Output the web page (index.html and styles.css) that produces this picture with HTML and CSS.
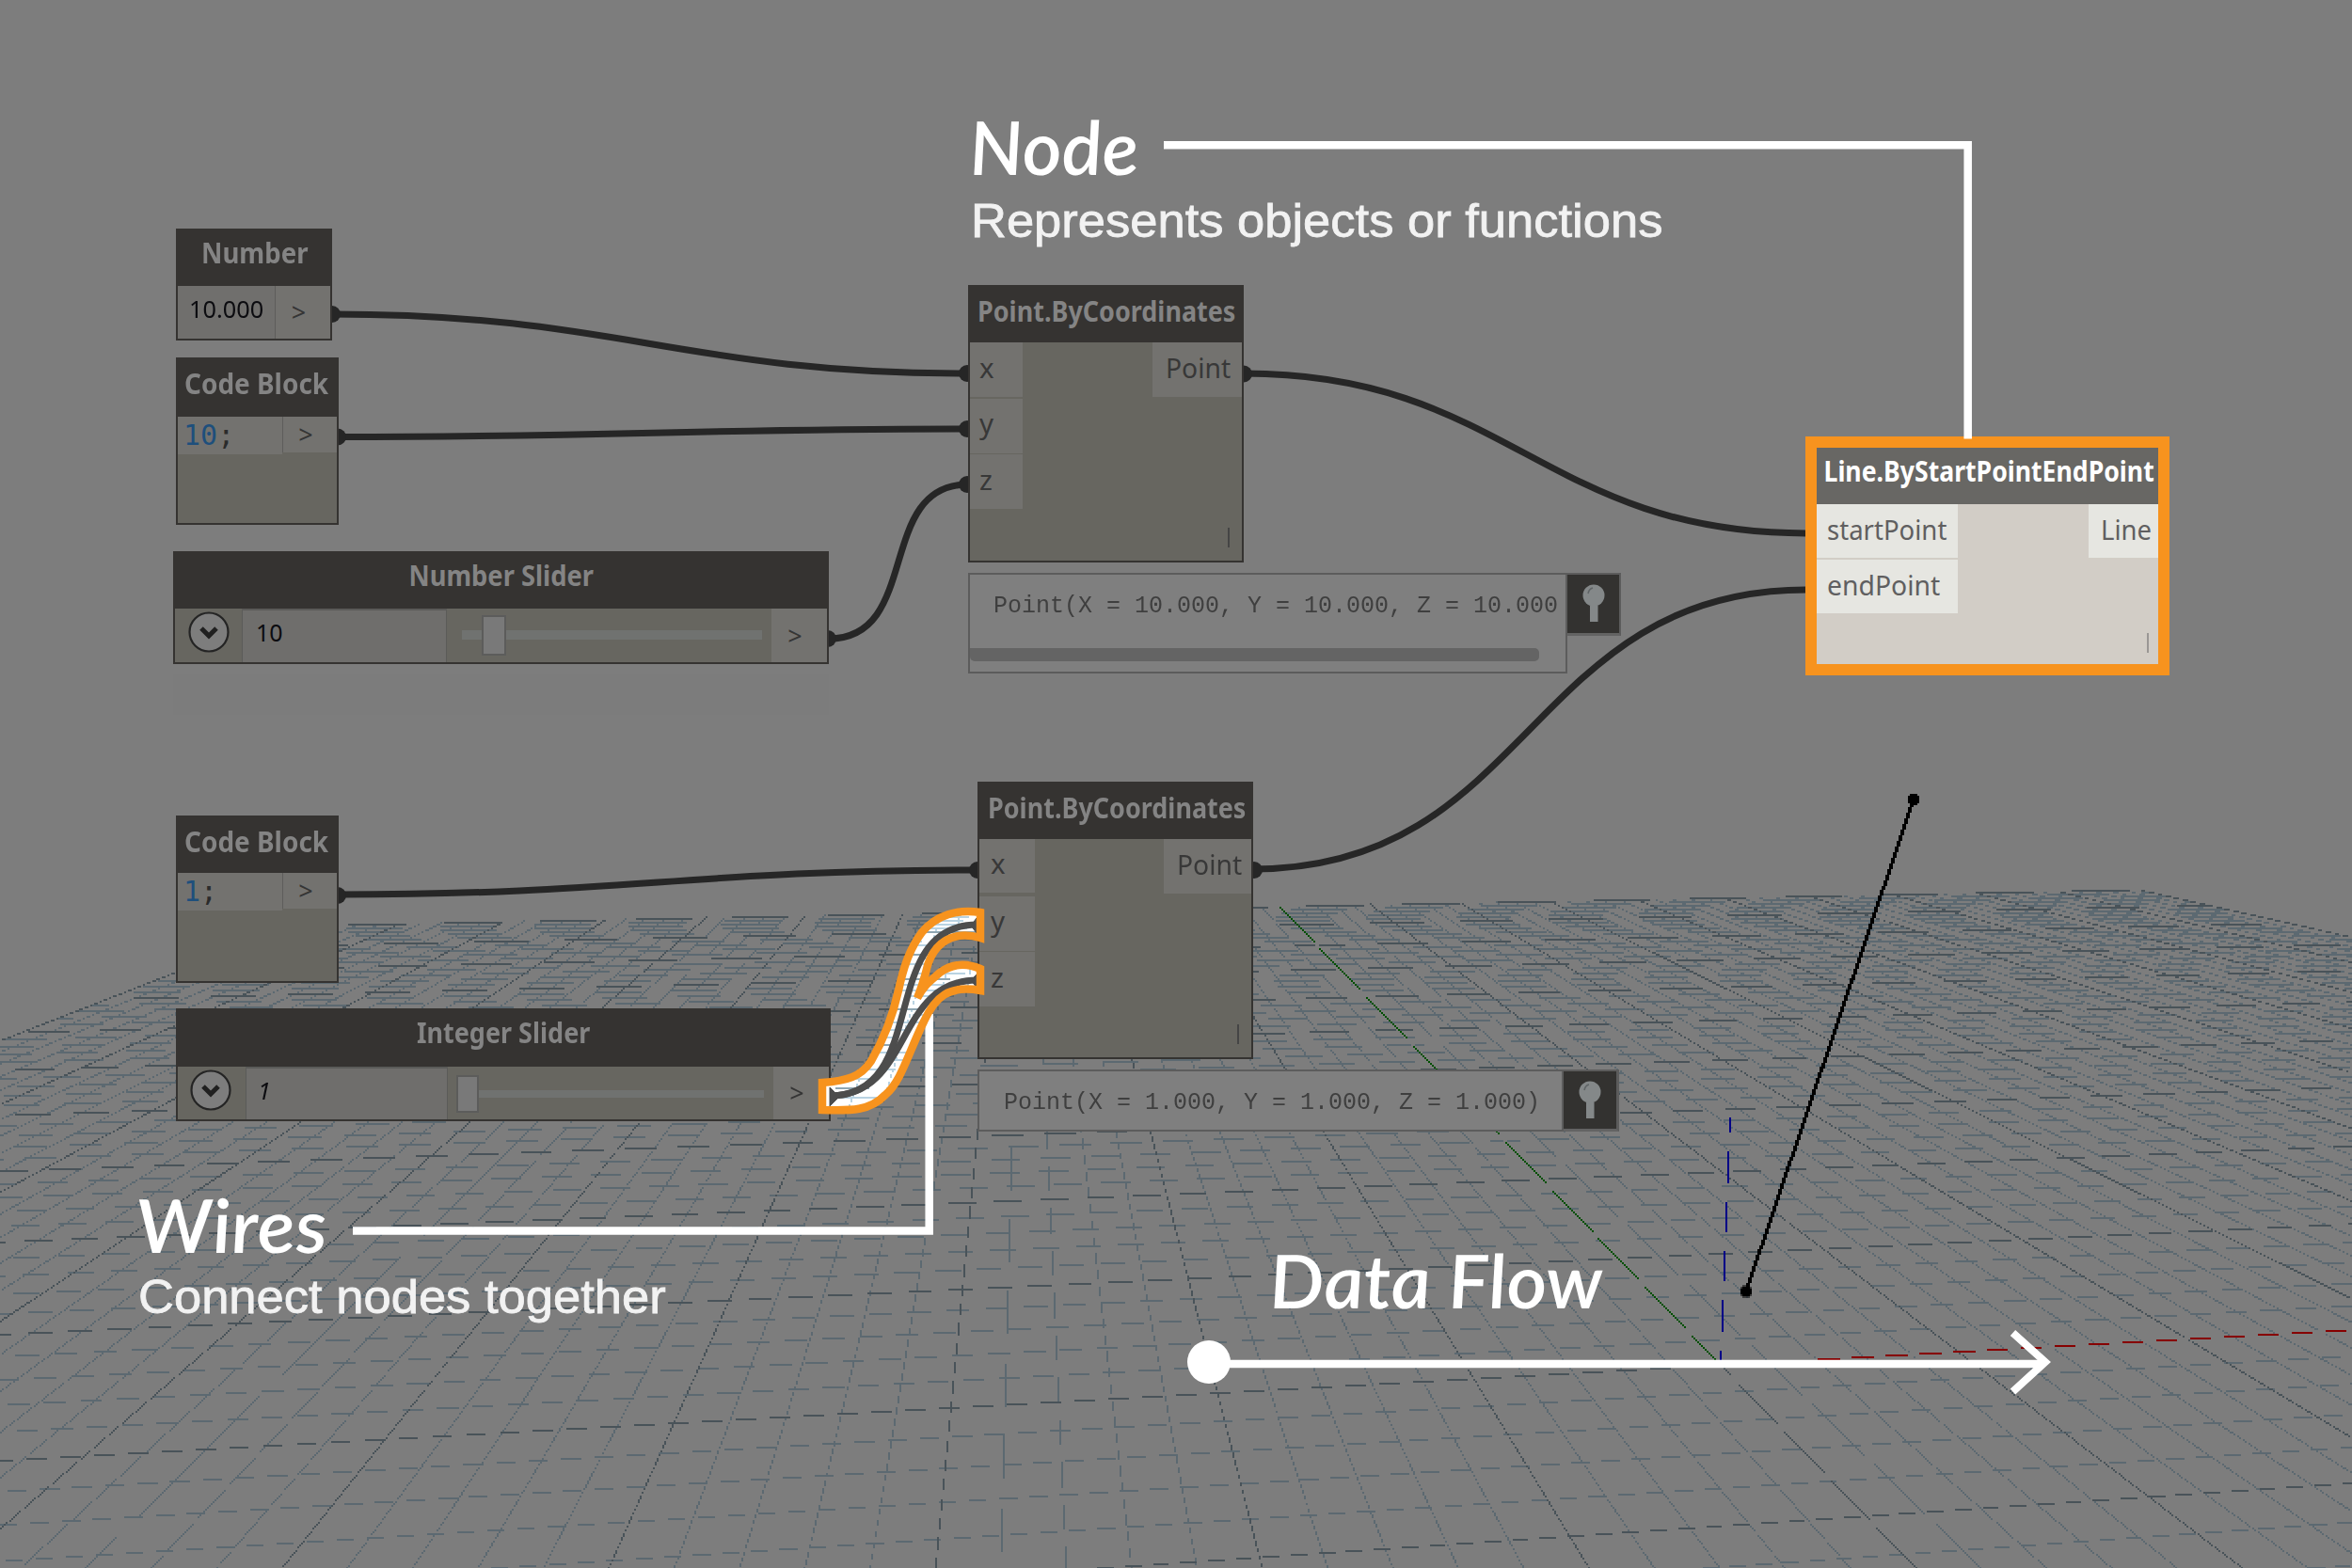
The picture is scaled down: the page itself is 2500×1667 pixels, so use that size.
FILE: index.html
```html
<!DOCTYPE html>
<html lang="en">
<head>
<meta charset="utf-8">
<title>Visual program</title>
<link rel="stylesheet" href="styles.css">
</head>
<body>
<main class="workspace">
  <canvas class="scene" id="scene" width="1250" height="834"></canvas>

  <svg class="layer" viewBox="0 0 2500 1667">
    <rect class="ghost" x="184" y="717" width="697" height="43"/>
    <g class="wire">
      <path d="M353 334C658 334 724 397 1029 397"/>
      <path d="M360 464.500C661 464.500 728 456 1029 456"/>
      <path d="M881 679C980 679 930 515 1029 515"/>
      <path d="M1322 397C1602 397 1640 567 1920 567"/>
      <path d="M1332 924C1628 924 1624 627 1920 627"/>
      <path d="M360 951C666 951 733 925 1039 925"/>
    </g>
    <g class="plug">
      <circle cx="353" cy="334" r="9"/><circle cx="1028" cy="397" r="9"/>
      <circle cx="359" cy="464.500" r="9"/><circle cx="1028" cy="456" r="9"/>
      <circle cx="880" cy="679" r="9"/><circle cx="1028" cy="515" r="9"/>
      <circle cx="1322" cy="397.500" r="9"/><circle cx="1333" cy="925" r="9"/>
      <circle cx="359" cy="952" r="9"/><circle cx="1039" cy="925" r="9"/>
    </g>
  </svg>

  <section class="node number">
    <h2 class="head low"><span data-w="113">Number</span></h2>
    <div class="row">
      <div class="cell value"><span data-w="79">10.000</span></div>
      <div class="cell out">&gt;</div>
    </div>
  </section>

  <section class="node code code-a">
    <h2 class="head"><span data-w="153">Code Block</span></h2>
    <div class="row short">
      <div class="cell script"><b>10</b>;</div>
      <div class="cell out">&gt;</div>
    </div>
  </section>

  <section class="node slider slider-a">
    <h2 class="head low"><span data-w="197">Number Slider</span></h2>
    <div class="row">
      <div class="toggle"><svg width="46" height="46" viewBox="0 0 46 46"><circle cx="23" cy="23" r="20.500"/><path d="M15 19l8 8 8-8"/></svg></div>
      <div class="cell field"><span data-w="29">10</span></div>
      <div class="track"><i class="bar"></i><i class="thumb"></i></div>
      <div class="cell out">&gt;</div>
    </div>
  </section>

  <section class="node point point-a">
    <h2 class="head"><span data-w="274">Point.ByCoordinates</span></h2>
    <div class="ports">
      <div class="ins"><div class="port"><span>x</span></div><div class="port"><span>y</span></div><div class="port"><span>z</span></div></div>
      <div class="port res"><span data-w="69">Point</span></div>
    </div>
    <i class="lacing"></i>
  </section>

  <section class="preview preview-a">
    <div class="bubble"><code>Point(X = 10.000, Y = 10.000, Z = 10.000)</code><i class="scroll"></i></div>
    <div class="pin"><svg width="30" height="56" viewBox="0 0 30 56"><circle cx="15" cy="16" r="11.500"/><path d="M9 14q1-5 5-6"/><rect x="11" y="27" width="8.500" height="17"/></svg></div>
  </section>

  <section class="node code code-b">
    <h2 class="head"><span data-w="153">Code Block</span></h2>
    <div class="row short">
      <div class="cell script"><b>1</b>;</div>
      <div class="cell out">&gt;</div>
    </div>
  </section>

  <section class="node slider slider-b">
    <h2 class="head low"><span data-w="184">Integer Slider</span></h2>
    <div class="row">
      <div class="toggle"><svg width="46" height="46" viewBox="0 0 46 46"><circle cx="23" cy="23" r="20.500"/><path d="M15 19l8 8 8-8"/></svg></div>
      <div class="cell field"><em>1</em></div>
      <div class="track"><i class="bar"></i><i class="thumb"></i></div>
      <div class="cell out">&gt;</div>
    </div>
  </section>

  <section class="node point point-b">
    <h2 class="head"><span data-w="274">Point.ByCoordinates</span></h2>
    <div class="ports">
      <div class="ins"><div class="port"><span>x</span></div><div class="port"><span>y</span></div><div class="port"><span>z</span></div></div>
      <div class="port res"><span data-w="69">Point</span></div>
    </div>
    <i class="lacing"></i>
  </section>

  <section class="preview preview-b">
    <div class="bubble"><code>Point(X = 1.000, Y = 1.000, Z = 1.000)</code></div>
    <div class="pin"><svg width="30" height="56" viewBox="0 0 30 56"><circle cx="15" cy="16" r="11.500"/><path d="M9 14q1-5 5-6"/><rect x="11" y="27" width="8.500" height="17"/></svg></div>
  </section>

  <section class="node line">
    <h2 class="head"><span data-w="351">Line.ByStartPointEndPoint</span></h2>
    <div class="ports">
      <div class="ins"><div class="port"><span data-w="127">startPoint</span></div><div class="port"><span data-w="120">endPoint</span></div></div>
      <div class="port res"><span data-w="54">Line</span></div>
    </div>
    <i class="lacing"></i>
  </section>

  <svg class="layer" viewBox="0 0 2500 1667">
    <g class="leader">
      <path d="M1237 154.300H2091.700V466.500"/>
      <path d="M375 1308.500H987.700V1078"/>
      <path d="M1285 1450H2170"/>
    </g>
    <circle class="origin" cx="1285" cy="1448" r="23"/>
    <path class="arrow" d="M2139.500 1417L2174 1448L2139.500 1479.500"/>
    <path class="tube-fill" d="M874 1151C900 1149 915 1145 926 1128C941 1102 949 1080 955 1053C960 1030 966 1010 980 991C995 973 1018 966 1042 970V997C1015 989 991 1000 984 1034Q981 1046 975 1061C983 1046 990 1042 999 1034C1013 1024 1028 1024 1042 1030V1053C1008 1047 994 1060 982 1086C966 1118 958 1150 941 1164C925 1181 905 1181 874 1180Z"/>
  </svg>
  <canvas class="scene lit" id="lit" width="1250" height="834"></canvas>
  <svg class="layer" viewBox="0 0 2500 1667">
    <g class="wire lit-wire">
      <path d="M882 1165C990 1165 931 983 1039 983"/>
      <path d="M882 1165C971 1165 950 1042 1039 1042"/>
      <path class="stub" d="M882 1156V1176L892 1166Z M1038 976V992L1032 984Z M1038 1036V1050L1032 1042Z"/>
    </g>
    <path class="tube-edge" d="M874 1151C900 1149 915 1145 926 1128C941 1102 949 1080 955 1053C960 1030 966 1010 980 991C995 973 1018 966 1042 970V997C1015 989 991 1000 984 1034Q981 1046 975 1061C983 1046 990 1042 999 1034C1013 1024 1028 1024 1042 1030V1053C1008 1047 994 1060 982 1086C966 1118 958 1150 941 1164C925 1181 905 1181 874 1180Z"/>
  </svg>

  <div class="note note-node"><h1><span data-w="180">Node</span></h1><p><span data-w="735">Represents objects or functions</span></p></div>
  <div class="note note-wires"><h1><span data-w="202">Wires</span></h1><p><span data-w="561">Connect nodes together</span></p></div>
  <div class="note note-flow"><h1><span data-w="354">Data Flow</span></h1></div>
</main>
<script src="scene.js"></script>
</body>
</html>
```
FILE: scene.js
```js
// Perspective ground grid: 10 major divisions each way from the origin, 5 minor steps in each.
var O = [1829, 1451.4], VX = [15625, 684], VY = [1089.6, 682], A = 0.01866, B = 0.1727;

function project(i, j) {
  var a = A * i, b = B * j, w = 1 + a + b;
  return [(O[0] + a * VX[0] + b * VY[0]) / w, (O[1] + a * VX[1] + b * VY[1]) / w];
}

// Aliased line on the half-size raster: a pixel is set when its centre lies within the stroke.
function line(ctx, p, q, color, width) {
  ctx.fillStyle = color;
  var x0 = p[0] / 2, y0 = p[1] / 2, x1 = q[0] / 2, y1 = q[1] / 2;
  var dx = x1 - x0, dy = y1 - y0, len = Math.hypot(dx, dy), steep = Math.abs(dy) > Math.abs(dx);
  var reach = width / 2 * len / Math.max(Math.abs(dx), Math.abs(dy));
  var from = steep ? Math.min(y0, y1) : Math.min(x0, x1), to = steep ? Math.max(y0, y1) : Math.max(x0, x1);
  from = Math.max(0, Math.floor(from));
  to = Math.min(steep ? 834 : 1250, to);
  for (var k = from; k < to; k++) {
    var c = steep ? x0 + (k + 0.5 - y0) * dx / dy : y0 + (k + 0.5 - x0) * dy / dx;
    for (var m = Math.floor(c - reach); m <= c + reach; m++) {
      if (Math.abs(m + 0.5 - c) < reach) {
        if (steep) ctx.fillRect(m, k, 1, 1); else ctx.fillRect(k, m, 1, 1);
      }
    }
  }
}

function grid(ctx, minor, major) {
  [false, true].forEach(function (isMajor) {
    for (var n = -50; n <= 50; n++) {
      if ((n % 5 === 0) !== isMajor) continue;
      var c = isMajor ? major : minor, v = n / 5;
      if (v > -4) line(ctx, project(-10, v), project(10, v), c, 0.6);
      var f = project(v, 10), t = (1700 - f[1]) / (f[1] - VY[1]);
      line(ctx, f, [f[0] + (f[0] - VY[0]) * t, 1700], c, 0.6);
    }
  });
}

var ctx = document.getElementById('scene').getContext('2d');
grid(ctx, '#5c6971', '#495359');
line(ctx, O, project(10, 0), '#7d7d7d', 1.2);
line(ctx, O, project(0, 10), '#7d7d7d', 1.2);
line(ctx, O, project(10, 0), '#860000', 0.62);
line(ctx, O, project(0, 10), '#004f00', 0.62);
line(ctx, O, [1839, 1188], '#000086', 0.62);
line(ctx, [1856, 1373], [2034, 850], '#000', 1.9);
[[928, 686.5], [1017, 425]].forEach(function (d) {
  ctx.fillRect(d[0] - 3, d[1] - 2, 6, 4);
  ctx.fillRect(d[0] - 2, d[1] - 3, 4, 6);
});
grid(document.getElementById('lit').getContext('2d'), '#b9d3e2', '#8fa6b2');

// Fit each label to the width set for it.
document.querySelectorAll('[data-w]').forEach(function (el) {
  el.style.transform = 'scaleX(' + (el.dataset.w / el.offsetWidth) + ')';
});
```
FILE: styles.css
```css
* { box-sizing: border-box; margin: 0; padding: 0; }
body { background: #7d7d7d; font-family: "Noto Sans", "Open Sans", sans-serif; overflow: hidden; }
.workspace { position: relative; width: 2500px; height: 1667px; overflow: hidden; background: #7d7d7d; }
.scene { position: absolute; left: 0; top: 0; width: 2500px; height: 1668px; image-rendering: pixelated; }
.lit { clip-path: path("M874 1151C900 1149 915 1145 926 1128C941 1102 949 1080 955 1053C960 1030 966 1010 980 991C995 973 1018 966 1042 970V997C1015 989 991 1000 984 1034Q981 1046 975 1061C983 1046 990 1042 999 1034C1013 1024 1028 1024 1042 1030V1053C1008 1047 994 1060 982 1086C966 1118 958 1150 941 1164C925 1181 905 1181 874 1180Z"); }
.layer { position: absolute; left: 0; top: 0; width: 2500px; height: 1667px; }
[data-w] { display: inline-block; white-space: nowrap; transform-origin: 0 50%; }

.ghost { fill: #7c7c7c; }
.wire path { fill: none; stroke: #262626; stroke-width: 7; }
.plug circle { fill: #262626; }
.lit-wire path { stroke: #4d4d4d; }
.lit-wire .stub { fill: #4d4d4d; stroke-width: 1; }
.tube-fill { fill: #fff; }
.tube-edge { fill: none; stroke: #f7931e; stroke-width: 8.5; }
.leader path { fill: none; stroke: #fff; stroke-width: 8.5; }
.origin { fill: #fff; }
.arrow { fill: none; stroke: #fff; stroke-width: 8; }

.node { position: absolute; display: flex; flex-direction: column; border: 2px solid #353331; background: #676660; }
.head { flex: none; display: flex; align-items: center; justify-content: center; height: 59px; padding: 0 0 9px 1px; background: #353331; color: #848484; font-size: 30.5px; line-height: 40px; font-weight: 700; }
.head span { transform-origin: 50% 50%; }
.low { padding-bottom: 14px; }
.row { display: flex; flex: 1; }
.short { flex: none; height: 40px; }
.cell { display: flex; align-items: center; background: #73726f; }
.out { justify-content: center; padding-right: 9px; border-left: 1.5px solid #5e5d5b; color: #353535; font-size: 27px; line-height: 36px; }
.value { width: 103px; padding: 0 0 9px 12px; background: #706f6d; color: #0c0c10; font-size: 25px; }
.number .out { flex: 1; }

.number { left: 187px; top: 243px; width: 166px; height: 119px; }
.code { left: 187px; width: 173px; height: 178px; }
.code .head { padding-right: 2px; }
.code-a { top: 380px; }
.code-a .head { height: 61px; padding-bottom: 11px; }
.code-b { top: 867px; }
.script { width: 111px; padding: 0 0 1px 6px; color: #2b2b2b; font: 30px/38px "DejaVu Sans Mono", monospace; }
.script b { font-weight: 400; color: #1e4f7c; }
.code-b .script { padding-bottom: 0; }
.short .out { flex: 1; height: 38px; padding-bottom: 1px; }

.slider-a { left: 184px; top: 586px; width: 697px; height: 120px; }
.slider-b { left: 187px; top: 1072px; width: 696px; height: 120px; }
.slider-b .head { height: 60px; }
.toggle { display: flex; width: 71px; padding: 2px 0 0 13px; }
.toggle circle { fill: #7d7d7d; stroke: #242424; stroke-width: 2.2; }
.toggle path { fill: none; stroke: #202020; stroke-width: 5; }
.field { width: 218px; padding: 0 0 9px 14px; border: solid #5b5b59; border-width: 2px 1.5px 0; background: #6f6e6c; color: #0c0c10; font-size: 25px; }
.slider-b .field { width: 215px; padding-left: 12px; }
.slider-b .toggle { width: 72px; }
.slider-b .toggle svg { margin-left: -1px; }
.track { position: relative; flex: 1; }
.bar { position: absolute; left: 16px; right: 10px; top: 23px; height: 10px; background: #707270; }
.thumb { position: absolute; left: 37px; top: 7px; width: 26px; height: 43px; background: #797979; border: 2px solid #5c5c5b; }
.slider-b .thumb { left: 9px; top: 9px; width: 24px; height: 40px; }
.slider-b .bar { left: 30px; right: 10px; top: 25px; height: 8px; }
.slider .out { width: 59px; border: 0; }

.point { width: 293px; height: 295px; }
.point-a { left: 1029px; top: 303px; }
.point-b { left: 1039px; top: 831px; }
.ports { display: flex; justify-content: space-between; align-items: flex-start; color: #383838; font-size: 29.5px; line-height: 40px; }
.ins { display: grid; gap: 1.5px; }
.port { display: flex; align-items: center; height: 58px; padding: 0 0 5px 10px; background: #73726f; }
.point .ins .port { width: 56px; }
.point .res { width: 95px; padding-left: 14px; }
.point-b .ins .port { width: 59px; padding-left: 12px; }
.point-b .res { width: 93px; }
.point-b .ins .port:first-child { height: 57px; margin-bottom: 2px; }
.point-b .head { padding-left: 3px; }
.lacing { position: absolute; right: 13px; bottom: 14px; width: 2.5px; height: 21px; background: #454545; }

.line { left: 1919px; top: 464px; width: 387px; height: 254px; border: 12px solid #f7931e; background: #d2cdc6; }
.line .head { height: 60px; background: #686764; color: #fff; padding: 0 0 12px 4px; }
.line .ports { color: #605f60; }
.line .port { height: 57px; padding-bottom: 3px; background: #e6e6e1; }
.line .ins { gap: 2px; }
.line .ins .port { width: 150px; padding-left: 11px; }
.line .res { width: 74px; padding-left: 13px; }
.line .lacing { right: 10px; bottom: 12px; background: #9a9794; }

.preview { position: absolute; display: flex; align-items: flex-start; }
.bubble { position: relative; background: #7f7f7f; border: 2px solid #5c5c5c; overflow: hidden; }
.bubble code { display: block; width: 605px; overflow: hidden; white-space: pre; padding: 19px 0 0 25px; color: #3f3f3f; font: 25px/30px "Liberation Mono", monospace; }
.preview-a code { width: 627px; }
.scroll { position: absolute; left: 0; bottom: 11px; width: 605px; height: 14px; border-radius: 0 5px 5px 5px; background: #646464; }
.pin { display: flex; justify-content: center; padding-top: 6px; width: 57px; height: 67px; background: #333230; border: 2px solid #5c5c5c; border-left: 0; border-bottom: 3px solid #636363; }
.pin circle, .pin rect { fill: #848889; }
.pin path { fill: none; stroke: #5f6466; stroke-width: 1.5; }
.preview-a { left: 1029px; top: 609px; width: 694px; }
.preview-a .bubble { width: 637px; height: 107px; }
.preview-b { left: 1039px; top: 1137px; }
.preview-b .bubble { width: 623px; height: 66px; }
.preview-b code { padding-left: 26px; }
.preview-b .pin { width: 59px; height: 66px; border-right-width: 3px; }

.note { position: absolute; color: #fff; white-space: nowrap; }
.note h1 { font: italic 600 79px/79px Lato, sans-serif; transform: skewX(4deg); transform-origin: 0 88%; }
.note p { margin-top: 15px; color: #f2f2f2; font: 50px/50px "Liberation Sans", Arial, sans-serif; -webkit-text-stroke: 0.8px #f2f2f2; }
.note-node { left: 1032px; top: 116px; }
.note-wires { left: 147px; top: 1262px; }
.note-wires p { margin-top: 13px; }
.note-flow { left: 1351px; top: 1321px; }
```
